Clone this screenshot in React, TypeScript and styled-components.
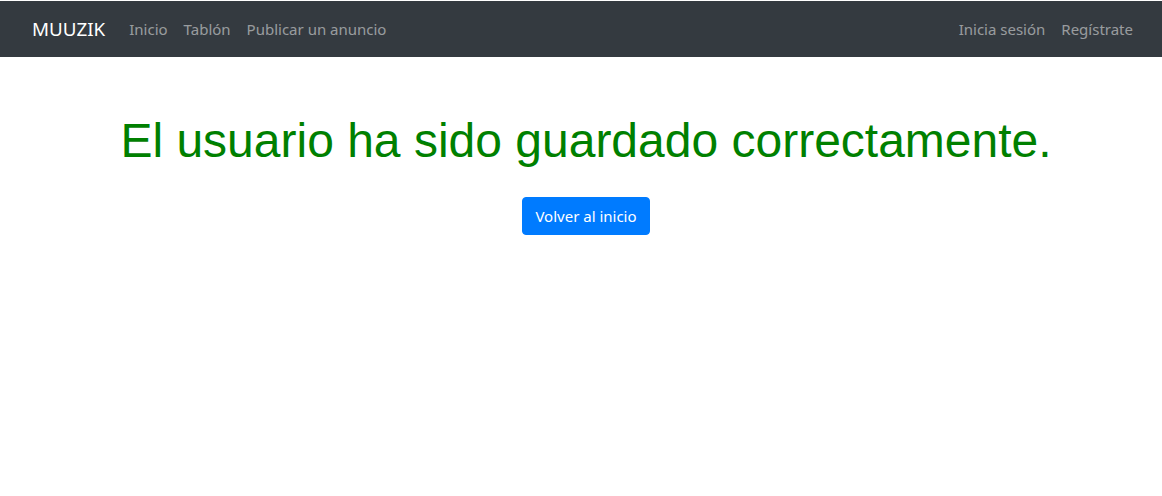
import styled, { createGlobalStyle } from 'styled-components';

const GlobalStyle = createGlobalStyle`
  html, body {
    margin: 0;
    padding: 0;
    background: #fff;
  }
  body {
    padding-top: 1px;
    font-family: "Noto Sans", "Liberation Sans", sans-serif;
  }
  * {
    box-sizing: border-box;
  }
`;

const NavBar = styled.nav`
  height: 56px;
  padding: 0 21px 0 32px;
  background-color: #343a40;
  display: flex;
  align-items: center;
`;

const Brand = styled.a`
  font-size: 18.8px;
  color: #fff;
  margin-right: 16px;
  text-decoration: none;
`;

const NavList = styled.ul<{ right?: boolean }>`
  list-style: none;
  margin: 0 0 0 ${(props) => (props.right ? 'auto' : '0')};
  padding: 0;
  display: flex;
`;

const NavLink = styled.a`
  display: block;
  padding: 8px;
  font-size: 15px;
  line-height: 24px;
  color: rgba(255, 255, 255, 0.5);
  text-decoration: none;
`;

const Main = styled.main`
  padding: 55px 0 0 10px;
  display: flex;
  flex-direction: column;
  align-items: center;
`;

const Message = styled.h1`
  margin: 0 0 27px;
  font-family: "Liberation Sans", Arial, sans-serif;
  font-size: 48px;
  font-weight: 400;
  line-height: 1.2;
  color: green;
`;

const Button = styled.a`
  display: inline-block;
  padding: 6px 12px;
  font-size: 15px;
  line-height: 24px;
  color: #fff;
  background-color: #007bff;
  border: 1px solid #007bff;
  border-radius: 4px;
  text-decoration: none;
`;

export default function App() {
  return (
    <>
      <GlobalStyle />
      <NavBar>
        <Brand href="#">MUUZIK</Brand>
        <NavList>
          <li><NavLink href="#">Inicio</NavLink></li>
          <li><NavLink href="#">Tablón</NavLink></li>
          <li><NavLink href="#">Publicar un anuncio</NavLink></li>
        </NavList>
        <NavList right>
          <li><NavLink href="#">Inicia sesión</NavLink></li>
          <li><NavLink href="#">Regístrate</NavLink></li>
        </NavList>
      </NavBar>
      <Main>
        <Message>El usuario ha sido guardado correctamente.</Message>
        <Button href="#">Volver al inicio</Button>
      </Main>
    </>
  );
}
